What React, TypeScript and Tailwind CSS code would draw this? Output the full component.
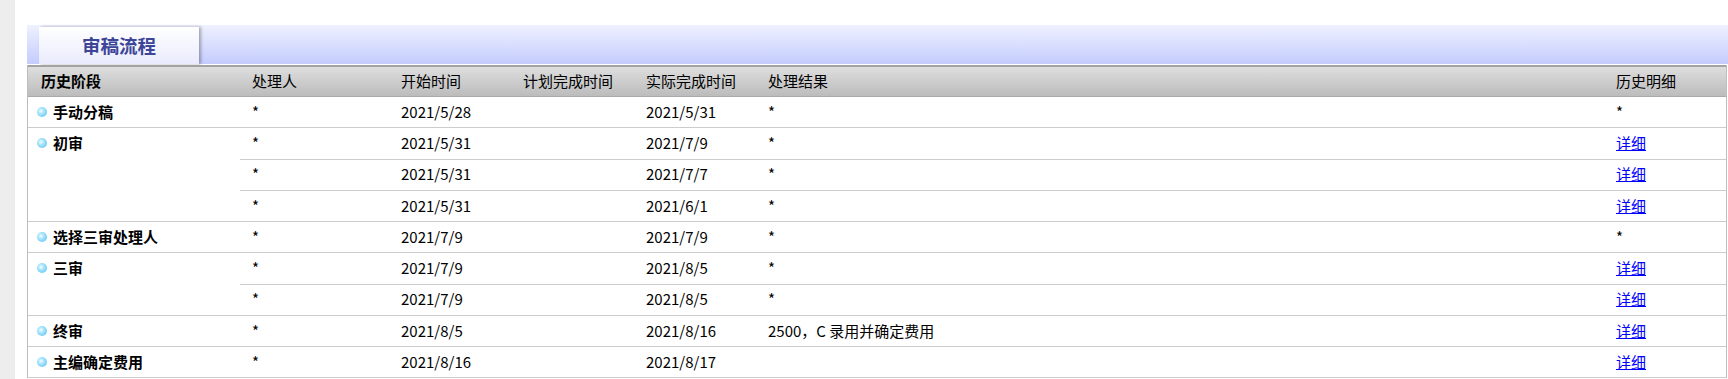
const font = { fontFamily: '"Noto Sans CJK SC", "Noto Sans", sans-serif' };

type Row = {
  handler: string;
  start: string;
  planned: string;
  actual: string;
  result: string;
  detail: boolean;
};

type Stage = { name: string; rows: Row[] };

const r = (start: string, actual: string, result = '*', detail = true): Row => ({
  handler: '*',
  start,
  planned: '',
  actual,
  result,
  detail,
});

const stages: Stage[] = [
  { name: '手动分稿', rows: [r('2021/5/28', '2021/5/31', '*', false)] },
  {
    name: '初审',
    rows: [r('2021/5/31', '2021/7/9'), r('2021/5/31', '2021/7/7'), r('2021/5/31', '2021/6/1')],
  },
  { name: '选择三审处理人', rows: [r('2021/7/9', '2021/7/9', '*', false)] },
  { name: '三审', rows: [r('2021/7/9', '2021/8/5'), r('2021/7/9', '2021/8/5')] },
  { name: '终审', rows: [r('2021/8/5', '2021/8/16', '2500，C 录用并确定费用')] },
  { name: '主编确定费用', rows: [r('2021/8/16', '2021/8/17', '')] },
];

const cols = 'grid grid-cols-[149px_122px_123px_122px_848px_122px]';

function Dot() {
  return (
    <span className="inline-block h-[10px] w-[10px] shrink-0 rounded-full bg-[radial-gradient(circle_at_40%_40%,#f4fcff_0%,#a8e4fb_35%,#45bdf0_100%)]" />
  );
}

export default function App() {
  return (
    <div className="flex min-h-[379px] bg-white text-[15px] text-black" style={font}>
      <div className="w-[15px] shrink-0 bg-[#ededed]" />
      <div className="flex-1 pl-[12px] pt-[25px]">
        {/* tab bar */}
        <div className="h-[39px] bg-linear-to-b from-[#eff1ff] to-[#c4ccfd] pl-[12px] pt-[2px]">
          <div className="flex h-[37px] w-[160px] items-center justify-center bg-linear-to-b from-white to-[#e9ebfd] text-[18.5px] font-bold text-[#3d4597] shadow-[2px_0_3px_rgba(0,0,0,0.3)]">
            审稿流程
          </div>
        </div>

        <div className="mt-px w-[1700px] border-x border-[#bdbdbd]">
          {/* header */}
          <div className="flex h-[32px] items-center border-t-2 border-b border-t-[#a3a3a3] border-b-[#a9a9a9] bg-linear-to-b from-[#dedede] to-[#bcbcbc]">
            <div className="w-[212px] pl-[13px] font-bold">历史阶段</div>
            <div className={cols + ' [&>div]:pl-[12px]'}>
              <div>处理人</div>
              <div>开始时间</div>
              <div>计划完成时间</div>
              <div>实际完成时间</div>
              <div>处理结果</div>
              <div>历史明细</div>
            </div>
          </div>

          {/* body */}
          {stages.map((s) => (
            <div key={s.name} className="flex">
              <div className="w-[212px] border-b border-[#cccccc]">
                <div className="flex h-[30.25px] items-center gap-[6px] pl-[9px] font-bold">
                  <Dot />
                  <span>{s.name}</span>
                </div>
              </div>
              <div className="flex flex-col">
                {s.rows.map((row, i) => (
                  <div
                    key={i}
                    className={cols + ' h-[31.25px] items-center border-b border-[#cccccc] [&>div]:pl-[12px]'}
                  >
                    <div>{row.handler}</div>
                    <div>{row.start}</div>
                    <div>{row.planned}</div>
                    <div>{row.actual}</div>
                    <div>{row.result}</div>
                    <div>
                      {row.detail ? (
                        <a href="#" className="text-[#0000ff] underline">
                          详细
                        </a>
                      ) : (
                        '*'
                      )}
                    </div>
                  </div>
                ))}
              </div>
            </div>
          ))}
        </div>
      </div>
    </div>
  );
}
